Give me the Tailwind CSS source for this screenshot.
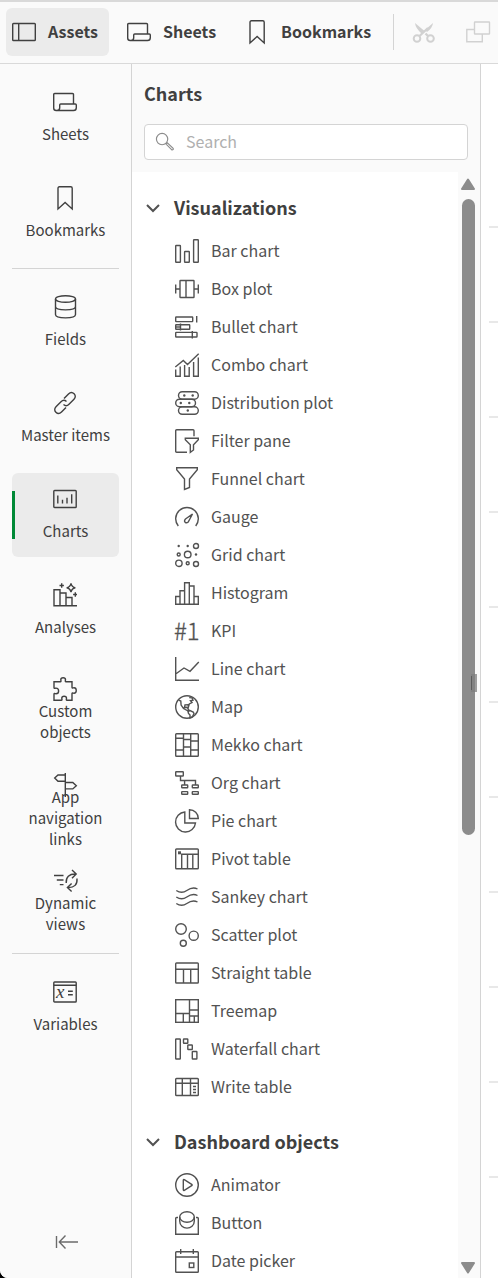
<!DOCTYPE html>
<html lang="en">
<head>
    <meta charset="UTF-8">
    <meta name="viewport" content="width=device-width, initial-scale=1.0">
    <title>Assets - Charts</title>
    <script src="https://cdn.jsdelivr.net/npm/@tailwindcss/browser@4"></script>
</head>
<body class="bg-black font-['Noto_Sans_CJK_SC','Noto_Sans',sans-serif] text-[#404040]">
    <div class="flex h-screen flex-col overflow-hidden rounded-bl-lg bg-white">

        <!-- Toolbar -->
        <header class="flex h-16 shrink-0 items-start gap-3 overflow-hidden border-t-2 border-b border-[#d9d9d9] bg-[#fafafa] pt-1.5 pl-1.5">
            <button class="flex h-12 shrink-0 items-center gap-3 rounded-md bg-[#ebebeb] pr-[11px] pl-1.5 text-base font-bold"><svg data-icon="assets" class="size-6"></svg><span class="pb-0.5">Assets</span></button>
            <button class="flex h-12 shrink-0 items-center gap-3 rounded-md pr-[11px] pl-1.5 text-base font-bold"><svg data-icon="sheets" class="size-6"></svg><span class="pb-0.5">Sheets</span></button>
            <button class="flex h-12 shrink-0 items-center gap-3 rounded-md pr-2.5 pl-1.5 text-base font-bold"><svg data-icon="bookmark" class="size-6"></svg><span class="pb-0.5">Bookmarks</span></button>
            <div class="mt-1.5 h-9 w-px shrink-0 bg-[#d4d4d4]"></div>
            <button aria-label="Cut" class="h-12 shrink-0 pr-3 pl-1.5 text-[#d1d1d1]" disabled><svg data-icon="cut" class="size-6"></svg></button>
            <button aria-label="Copy" class="h-12 shrink-0 pl-1.5 text-[#d1d1d1]" disabled><svg data-icon="copy" class="size-6"></svg></button>
        </header>

        <div class="flex min-h-0 flex-1">
            <!-- Asset categories -->
            <nav class="flex w-33 shrink-0 flex-col border-r border-[#d4d4d4] bg-[#fafafa] p-3">
                <div id="nav" class="flex flex-col gap-3"></div>
                <button aria-label="Collapse" class="mt-auto mb-3 flex justify-center text-[#6b6b6b]"><svg data-icon="collapse" class="size-6"></svg></button>
            </nav>

            <!-- Charts panel -->
            <section class="flex w-[349px] shrink-0 flex-col border-r border-[#d4d4d4] bg-[#fafafa]">
                <h1 class="px-3 pt-[15px] pb-[17px] text-lg leading-7 font-bold">Charts</h1>
                <div class="relative mx-3 mb-3">
                    <svg data-icon="search" class="absolute top-2 left-[11px] size-5 text-[#8c8c8c]"></svg>
                    <input type="text" aria-label="Search" placeholder="Search" class="h-9 w-full rounded-[4px] border border-[#d4d4d4] bg-white pb-0.5 pl-[41px] text-base placeholder:text-[#b0b0b0]">
                </div>
                <div class="flex min-h-0 flex-1">
                    <div id="list" class="flex-1 overflow-hidden bg-white"></div>
                    <div class="relative flex w-[22px] flex-col items-center pt-1.5 pr-0.5 pb-1 text-[#8c8c8c]">
                        <svg viewBox="0 0 14 12" class="h-3 w-3.5 shrink-0"><path d="M7 1.5 13 11H1z" fill="currentColor" stroke="currentColor" stroke-width="2" stroke-linejoin="round"/></svg>
                        <div class="mt-[9px] h-[58%] w-[13px] rounded-full bg-[#8c8c8c]"></div>
                        <svg viewBox="0 0 14 12" class="mt-auto h-3 w-3.5 shrink-0"><path d="M7 10.5 13 1H1z" fill="currentColor" stroke="currentColor" stroke-width="2" stroke-linejoin="round"/></svg>
                        <div class="absolute top-[502px] right-[3px] flex h-[18px] w-1.5 items-center border-r-2 border-[#9e9e9e] bg-[#828282]"><span class="h-3.5 w-px bg-[#5c5c5c]"></span></div>
                    </div>
                </div>
            </section>

            <!-- Sheet grid -->
            <main id="grid" class="flex flex-1 flex-col gap-[93px] overflow-hidden pt-[162px] pl-2"></main>
        </div>
    </div>

    <script>
        const icons = {
            assets: '<rect x=".7" y="3.5" width="22.6" height="17" rx=".8"/><path d="M6.7 3.5v17"/>',
            sheets: '<path d="M20.5 14V4.5q0-1-1-1H1.7q-1 0-1 1V18c0 1.7.8 2.5 2.500 2.500h17.300c2 0 2.800-1 2.800-2.800V15q0-1-1-1H7.700q-1 0-1 1v2.800c0 1.900-.8 2.700-2.700 2.700"/>',
            bookmark: '<path d="M5 23V2.200Q5 .8 6.400 .8h11.400q1.400 0 1.400 1.400V23l-7.100-6.500z"/>',
            cut: '<circle cx="5" cy="18.500" r="3.300" stroke-width="2"/><circle cx="18.500" cy="18.500" r="3.300" stroke-width="2"/><path d="M7.500 16 16 8M16 16l-2.500-2.500" stroke-width="2.300"/><path d="M3 3l9.500 8-3 2.500Q3.500 8 3 3zM21 3l-8 7 2 2q5.500-4 6-9z" fill="currentColor" stroke="none"/>',
            copy: '<rect x="8.500" y="2" width="15" height="12" rx=".5"/><path d="M8.500 9.500H.8v12.300h15.500V14"/>',
            search: '<circle cx="8.500" cy="8.500" r="6.800"/><path d="m13.300 14.500 1.500-1.500 7 6.500q.6 1-.2 1.700t-1.700 0z"/>',
            database: '<ellipse cx="12.500" cy="4" rx="10" ry="3.300"/><path d="M2.500 4v15.500c0 4.500 20 4.500 20 0V4M2.500 11.500c0 4.500 20 4.500 20 0"/>',
            link: '<path d="m11 7.500 4.500-4.600c3.800-3.800 9.300 1.500 5.500 5.400l-5 5c-1.700 1.700-4 1.600-5.500.2M13 16.500l-4.500 4.600c-3.800 3.800-9.300-1.500-5.500-5.400l5-5c1.700-1.700 4-1.600 5.500-.2"/>',
            charts: '<rect x=".8" y="3.500" width="22.400" height="17" rx=".8"/><path d="M4.800 8.500v8M9.500 12.800v3.700M14 10.800v5.700M18.700 7.300v9.200"/>',
            analyses: '<path d="M24 22.800H1V6.800h6v16M7 10h6v12.800M13 14.500h6v8.300M8.700.3v4.400M6.500 2.500h4.400M22.300 9.300v4.400M20.100 11.500H24M18 .3q.7 3.700 4.300 4.400Q18.700 5.400 18 9.100q-.7-3.700-4.300-4.400Q17.300 4 18 .3z"/>',
            custom: '<path d="M1 4.700h6.300c1.200 0 .5-1.200.5-2 0-2.600 4.700-2.600 4.700 0 0 .8-.7 2 .5 2h6v5.500c0 1.300 1.200.6 2 .6 3 0 3 5.400 0 5.400-.8 0-2-.7-2 .6v6.500h-5c-1.200 0-.5-1.200-.5-2 0-2.700-4.700-2.700-4.700 0 0 .8.700 2-.5 2H1v-6.100c0-1.200 1-.5 2-.5 3.500 0 3.500-5.600 0-5.600-1 0-2 .8-2-.5z"/>',
            signpost: '<path d="M12.300 0v24M12.300 2H5L1.700 5 5 8.200h7.300M12.300 9.500h7.500l3.500 3.200-3.500 3.200h-7.500"/>',
            dynamic: '<path d="M1 6.500h9.500M3.800 11h6.700M6.800 15.600h3.700"/><path d="M13.200 14C12.800 8 16 4.800 22.800 5M19 1l4.200 4L19 9.200M24 9.500C24.500 15.500 21.500 18.800 14.800 18.600M18.600 22.600l-4.200-4 4.200-4.200"/>',
            variables: '<rect x=".8" y="2" width="22.400" height="20" rx=".8"/><path d="M.8 5.300h22.400M15 11.300h4.800M15 14.800h4.800"/><text x="3" y="18" font-family="Liberation Serif, serif" font-size="19" font-style="italic" fill="currentColor" stroke="none">x</text>',
            collapse: '<path d="M2.500 6v12M24 12H5M11.500 5.500 5.300 12l6.200 6.500"/>',
            bar: '<rect x=".7" y="6.500" width="4.700" height="16.800" rx=".5"/><rect x="9.600" y="12.500" width="4.700" height="10.800" rx=".5"/><rect x="18.600" y=".7" width="4.700" height="22.600" rx=".5"/>',
            box: '<rect x="5" y="3.500" width="14" height="17" rx=".5"/><path d="M11 3.500v17M.7 7.500v9M23.300 7.500v9M.7 12H5M19 12h4.300"/>',
            bullet: '<rect x=".7" y="2" width="17" height="4.600" rx=".5"/><path d="M21.700 1v6.500M5.500 8.500v7M17.300 16v7.500"/><rect x=".7" y="9.700" width="14" height="4.600" rx=".5"/><path d="M.7 12h4.800"/><rect x=".7" y="17.400" width="21.300" height="4.600" rx=".5"/>',
            combo: '<path d="m.3 14 8-6.500 4.200 4L23.700.8M.7 16.500v6.800h4.500V13.500M9.600 12v11.300h4.600V14M18.600 9v14.300h4.700V4.500"/>',
            distribution: '<rect x="3.500" y=".7" width="19.800" height="7.500" rx="3.700"/><rect x=".7" y="8.200" width="19.800" height="7.500" rx="3.700"/><rect x="3.500" y="15.800" width="19.800" height="7.500" rx="3.700"/><g fill="currentColor" stroke="none"><circle cx="9.300" cy="4.500" r="1.200"/><circle cx="17.700" cy="4.500" r="1.200"/><circle cx="5.800" cy="12" r="1.200"/><circle cx="14.300" cy="12" r="1.200"/><circle cx="12.800" cy="19.500" r="1.200"/></g>',
            filter: '<path d="M12 23.300H1.700q-1 0-1-1V1.700q0-1 1-1H18q1 0 1 1v5.600M10.300 9.300h13v1.500l-4.800 5V21l-3.200 2.300v-7.500l-5-5z"/>',
            funnel: '<path d="M1.700.8h20.600v2L14.500 12v8.500l-5 2V12L1.700 2.800z"/>',
            gauge: '<path d="M3.300 21a11.300 11.300 0 1 1 17.400 0M17.500 9l-7 5c-2.300 2.500.5 5 2.700 3z"/>',
            grid: '<circle cx="3.700" cy="3" r="1.200" fill="currentColor" stroke="none"/><circle cx="12.700" cy="3" r="1.200" fill="currentColor" stroke="none"/><circle cx="21" cy="3" r="2.500"/><circle cx="3.700" cy="11.500" r="1.500"/><circle cx="12.700" cy="11.500" r="3.300"/><circle cx="21" cy="11.500" r="1.200" fill="currentColor" stroke="none"/><circle cx="3.900" cy="20.300" r="3.200"/><circle cx="12.700" cy="20.300" r="1.500"/><circle cx="21" cy="21" r="2.500"/>',
            histogram: '<path d="M5 23.300V9.800h4.600M9.600 23.300V1.800h4.700v21.500M14.300 5H19v18.300M5 15.500H.7v7.800h22.600v-7.800H19"/>',
            kpi: '<text x="-1" y="21" font-size="24" font-weight="300" fill="currentColor" stroke-width=".3">#1</text>',
            line: '<path d="M.7 0v23.300H24M.7 17 9 11l6 3.300L23.800 5"/>',
            map: '<circle cx="12" cy="12" r="11.300"/><path d="m3.700 5.200 2.100.9.300 4 2.400 3.400 3.800 2 1.500-.6-1.800-2.700-2.500.2.500-2.500 3-.2.500 2 .8-2.700 2.700-1.500-1.500-1.700 2.500-.5-1-2.500-2.800-.2M13 16.500l2-1 3.200 1.500.8 1.500-1.700 3.500-2.300 1v-3l-1.500-1.500z"/>',
            mekko: '<rect x=".7" y=".7" width="22.600" height="22.600" rx=".8"/><path d="M8.500.7v22.600M15.700.7v22.600M.7 5.300h7.800M.7 17h7.800M8.500 6.500h7.200M8.500 14h7.200M15.700 8h7.600M15.700 17h7.600"/>',
            org: '<rect x=".7" y=".7" width="7.600" height="4.300" rx=".5"/><path d="M5.500 5v4.500h15v4.500M9.600 9.500V14"/><rect x="6.700" y="14" width="6" height="2.700" rx=".5"/><rect x="17.300" y="14" width="6" height="2.700" rx=".5"/><rect x="6.700" y="20.600" width="6" height="2.700" rx=".5"/><rect x="17.300" y="20.600" width="6" height="2.700" rx=".5"/>',
            pie: '<path d="M9.800 3v11h10.700A10 10 0 1 1 9.800 3zM14.500.7v8.800h8.800a8.800 8.800 0 0 0-8.800-8.800z"/>',
            pivot: '<rect x=".7" y="2" width="22.600" height="19.800" rx=".8"/><path d="M6.700 21.800V7.300h16.600M12.500 7.300v14.500M17.800 7.300v14.500"/><path d="M3 4.300h3v3H3z" fill="currentColor" stroke="none"/>',
            sankey: '<path d="M1.300 5.500c4 2.700 7 2.500 10.500 0s7-3.500 10.700-1.500M1.300 12c4 2.700 7 2.500 10.500 0s7-3.500 10.700-1.500M1.300 18.500c4 2.700 7 2.500 10.500 0s7-3.500 10.700-1.500"/>',
            scatter: '<circle cx="6" cy="6" r="5.300"/><circle cx="18.700" cy="12.700" r="4.600"/><circle cx="8.300" cy="20.300" r="3"/>',
            straight: '<rect x=".7" y="2" width="22.600" height="20" rx=".8"/><path d="M.7 8.300h22.600M8.500 8.300V22M15.700 8.300V22"/>',
            treemap: '<rect x=".7" y=".7" width="22.600" height="22.600"/><path d="M14.500.7v22.600M.7 14.500h13.800M8.300 14.500v8.800M14.500 11h8.800M14.500 17h8.800M19.300 17v6.300"/>',
            waterfall: '<rect x=".7" y="2" width="4.600" height="20" rx=".5"/><rect x="8.500" y="2" width="4.300" height="4.300" rx=".5"/><rect x="12.800" y="8" width="4.500" height="4.500" rx=".5"/><rect x="17.300" y="14.500" width="4.600" height="7.500" rx=".5"/>',
            write: '<rect x=".7" y="3.500" width="22.600" height="17" rx=".8"/><path d="M.7 8.300h22.600M7.300 3.500v17M15.500 3.500v17M18 11.500h3M18 14.500h3M18 17.500h3"/>',
            animator: '<circle cx="12" cy="12" r="11.300"/><path d="M8.300 7.200q0-1 1-.5l7.400 4.600q.9.700 0 1.400l-7.400 4.600q-1 .5-1-.5z"/>',
            button: '<ellipse cx="12" cy="6" rx="7.300" ry="5.300"/><path d="M4.700 6v4c0 9.500 14.600 9.500 14.600 0V6M3 6.500H1.700q-1 0-1 1v15.800h22.600V7.500q0-1-1-1H21"/>',
            date: '<rect x=".7" y="2.700" width="22.600" height="20.600" rx=".8"/><path d="M.7 8h22.600M5.700 0v5M18.300 0v5"/><rect x="14.300" y="14" width="4.500" height="4.500"/>',
            chevron: '<path d="m3 7.500 9 9 9-9" stroke-width="3"/>',
        };

        // third value: the label takes more than one line
        const navItems = [
            ['sheets', 'Sheets'], ['bookmark', 'Bookmarks'], null,
            ['database', 'Fields'], ['link', 'Master items'], ['charts', 'Charts'], ['analyses', 'Analyses'],
            ['custom', 'Custom objects', true], ['signpost', 'App navigation links', true], ['dynamic', 'Dynamic views', true], null,
            ['variables', 'Variables'],
        ];

        const groups = [
            ['Visualizations', [
                ['bar', 'Bar chart'], ['box', 'Box plot'], ['bullet', 'Bullet chart'], ['combo', 'Combo chart'],
                ['distribution', 'Distribution plot'], ['filter', 'Filter pane'], ['funnel', 'Funnel chart'],
                ['gauge', 'Gauge'], ['grid', 'Grid chart'], ['histogram', 'Histogram'], ['kpi', 'KPI'],
                ['line', 'Line chart'], ['map', 'Map'], ['mekko', 'Mekko chart'], ['org', 'Org chart'],
                ['pie', 'Pie chart'], ['pivot', 'Pivot table'], ['sankey', 'Sankey chart'], ['scatter', 'Scatter plot'],
                ['straight', 'Straight table'], ['treemap', 'Treemap'], ['waterfall', 'Waterfall chart'], ['write', 'Write table'],
            ]],
            ['Dashboard objects', [['animator', 'Animator'], ['button', 'Button'], ['date', 'Date picker']]],
        ];

        document.getElementById('nav').innerHTML = navItems.map(item => {
            if (!item) return '<hr class="border-[#d4d4d4]">';
            const [icon, label, multiline] = item;
            const active = label === 'Charts';
            return `
                <button class="${active ? 'bg-[#ebebeb]' : ''} ${multiline ? 'pt-3' : 'pt-3.5'} relative flex h-21 flex-col items-center rounded-md">
                    ${active ? '<span class="absolute top-[18px] left-0 h-12 w-[3px] bg-[#008936]"></span>' : ''}
                    <svg data-icon="${icon}" class="mr-px size-6 shrink-0"></svg>
                    <span class="${multiline ? '' : 'pb-0.5'} flex h-10 w-24 shrink-0 items-center justify-center text-[15px] leading-[21px]">${label}</span>
                </button>`;
        }).join('');

        document.getElementById('list').innerHTML = groups.map(([title, items]) => `
            <section class="pt-3">
                <h2><button class="flex h-12 items-center gap-[13px] pl-[13px] text-lg font-bold"><svg data-icon="chevron" class="size-4 text-[#525252]"></svg><span class="pb-0.5">${title}</span></button></h2>
                <ul>${items.map(([icon, label]) => `
                    <li class="flex h-[38px] items-center gap-3 pl-[43px] text-base text-[#525252]"><svg data-icon="${icon}" class="size-6"></svg><span class="pb-0.5">${label}</span></li>`).join('')}
                </ul>
            </section>`).join('');

        // grid marks down the left edge of the sheet
        document.getElementById('grid').innerHTML = '<span class="h-0.5 shrink-0 bg-[#e8e8e8]"></span>'.repeat(11);

        document.querySelectorAll('svg[data-icon]').forEach(svg => {
            svg.setAttribute('viewBox', '0 0 24 24');
            svg.setAttribute('fill', 'none');
            svg.setAttribute('stroke', 'currentColor');
            svg.setAttribute('stroke-width', '1.4');
            svg.classList.add('overflow-visible');
            svg.innerHTML = icons[svg.dataset.icon];
        });
    </script>
</body>
</html>
